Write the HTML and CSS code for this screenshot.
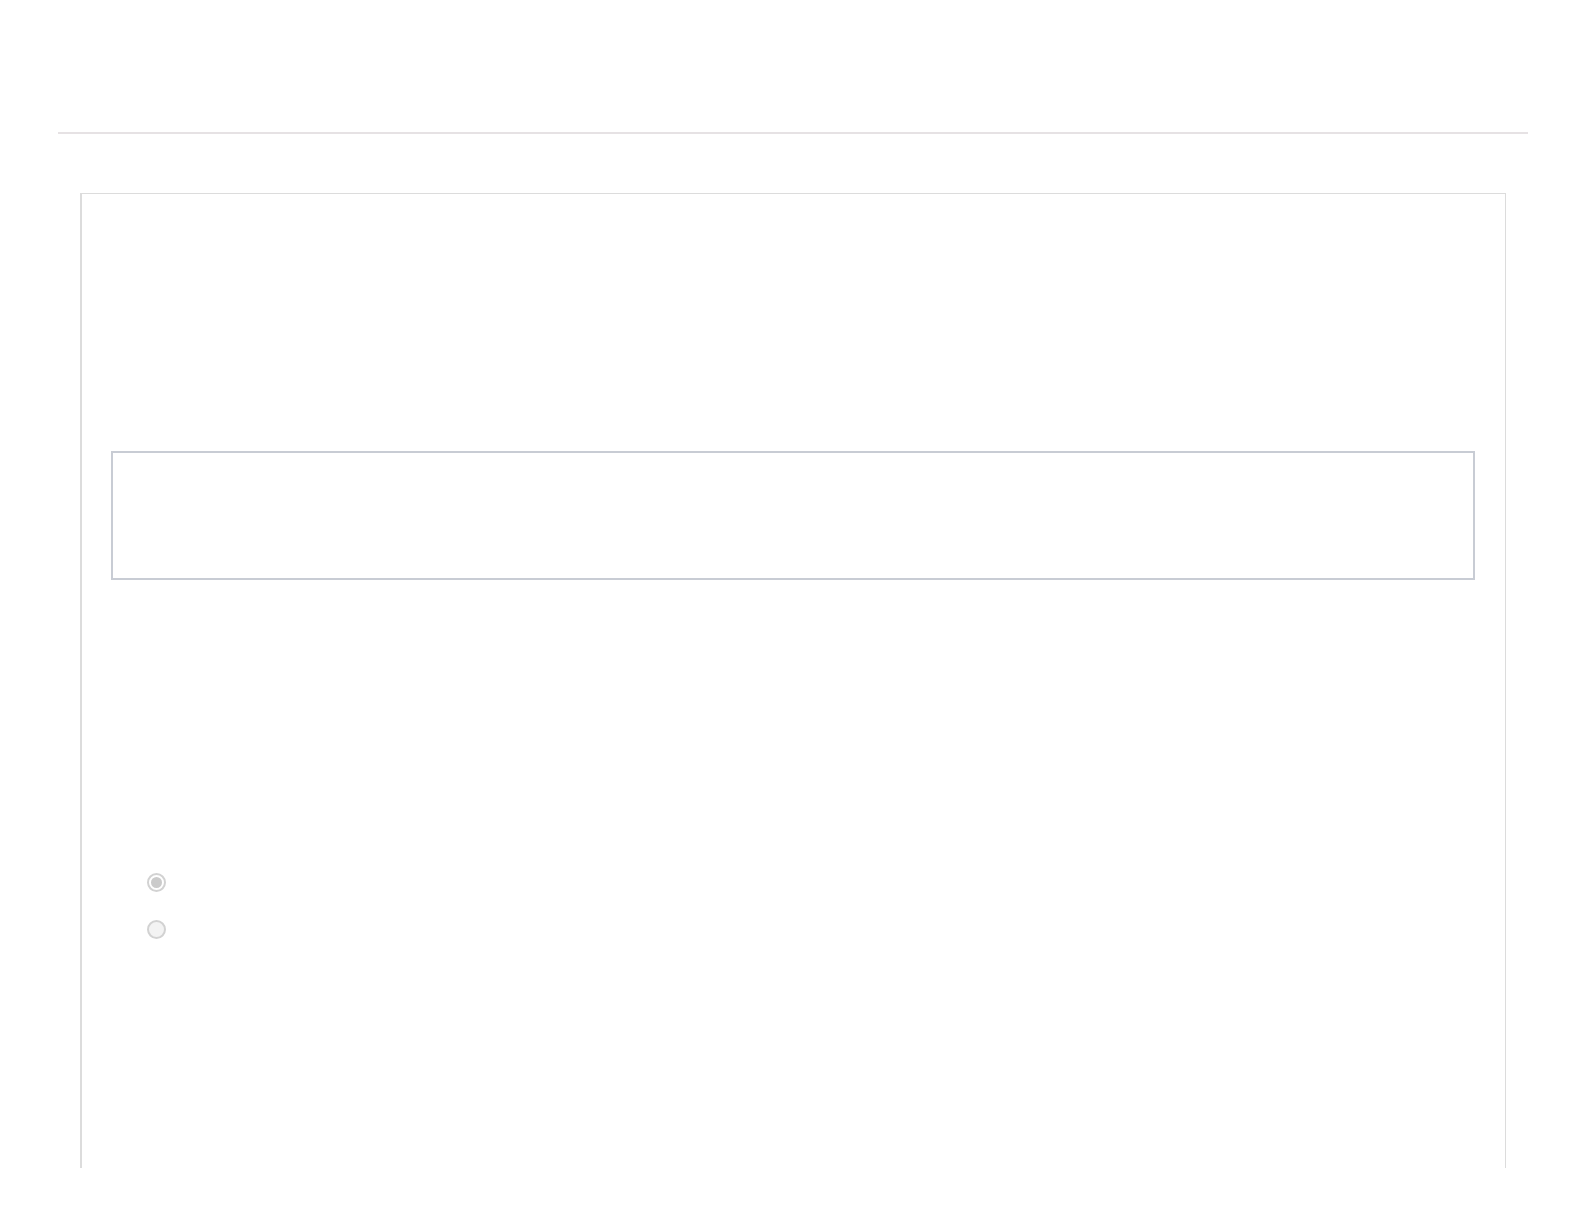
FILE: index.html
```html
<!DOCTYPE html>
<html lang="en">
<head>
    <meta charset="UTF-8">
    <meta name="viewport" content="width=device-width, initial-scale=1.0">
    <title>Form</title>
    <link rel="stylesheet" href="styles.css">
</head>
<body>
    <div class="page">
        <hr class="divider">
        <div class="card">
            <div class="card-head"></div>
            <div class="answer-box"></div>
            <div class="options">
                <label class="option">
                    <input type="radio" name="choice" checked disabled>
                </label>
                <label class="option">
                    <input type="radio" name="choice" disabled>
                </label>
            </div>
        </div>
    </div>
</body>
</html>
```

FILE: styles.css
```css
body {
    margin: 0;
    background-color: #fff;
    font-family: "Liberation Sans", Arial, sans-serif;
}
.page {
    padding: 132px 56px 0 58px;
}
.divider {
    margin: 0;
    height: 2px;
    border: none;
    background-color: #e6e2e4;
}
.card {
    margin: 59px 22px 0;
    height: 974px;
    padding: 0 30px 0 29px;
    border: 1px solid #dcdcdc;
    border-left-width: 2px;
    border-bottom: none;
}
.card-head {
    height: 257px;
}
.answer-box {
    height: 125px;
    border: 2px solid #c8ccd4;
}
.options {
    display: flex;
    flex-direction: column;
    gap: 28px;
    padding: 293px 0 0 36px;
}
.option {
    display: flex;
    align-items: center;
}
.option input {
    appearance: none;
    box-sizing: border-box;
    width: 19px;
    height: 19px;
    margin: 0;
    border: 2px solid #d2d2d2;
    border-radius: 50%;
    background-color: #f3f3f3;
}
.option input:checked {
    background-color: #cbcbcb;
    box-shadow: inset 0 0 0 2px #fff;
    background-clip: content-box;
    padding: 1px;
}
```
